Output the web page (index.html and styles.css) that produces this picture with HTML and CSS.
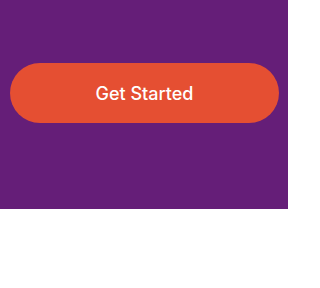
FILE: index.html
```html
<!DOCTYPE html>
<html>
<head>
<meta charset="utf-8">
<link rel="stylesheet" href="styles.css">
</head>
<body>
<section class="hero">
  <button class="cta">Get Started</button>
</section>
</body>
</html>
```
FILE: styles.css
```css
html, body { margin: 0; padding: 0; background: #fff; }
.hero {
  background: #651e78;
  width: 288px;
  height: 209px;
  box-sizing: border-box;
  padding: 63px 9px 0 10px;
  display: flex;
  flex-direction: column;
}
.cta {
  height: 60px;
  width: 100%;
  border: none;
  border-radius: 30px;
  background: #e54f32;
  color: #fff;
  font-family: "Inter", "Noto Sans", sans-serif;
  font-weight: 500;
  font-size: 18px;
  padding: 1px 0 0;
}
```
